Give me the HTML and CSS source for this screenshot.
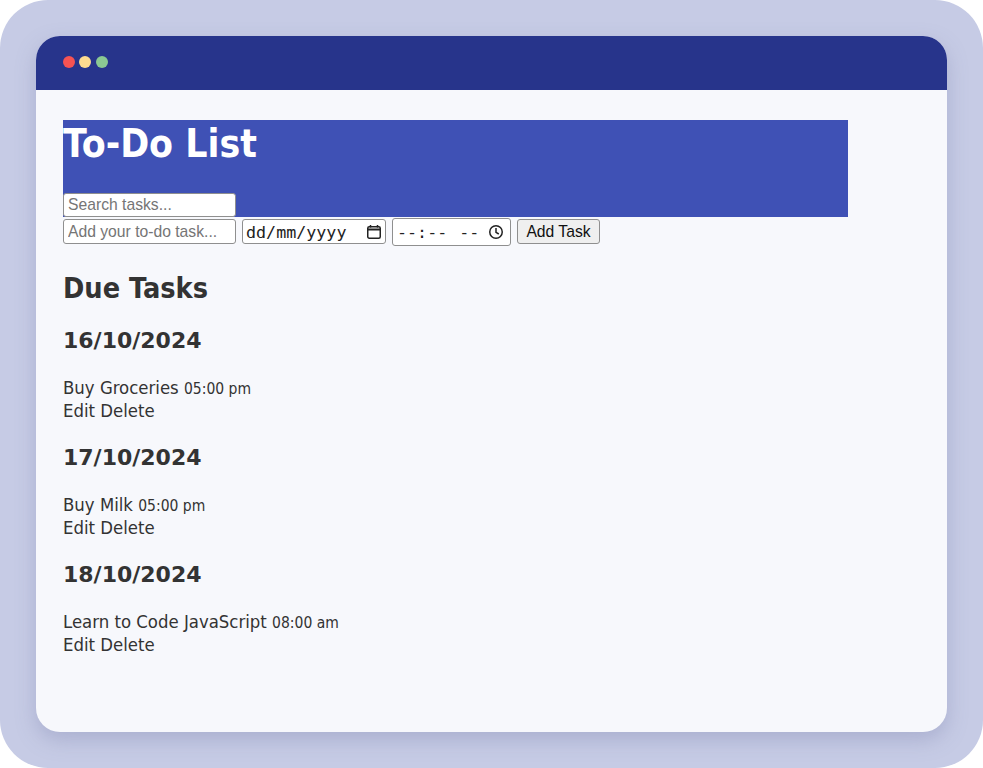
FILE: index.html
```html
<!DOCTYPE html>
<html lang="en-GB">
<head>
  <meta charset="UTF-8">
  <meta name="viewport" content="width=device-width, initial-scale=1.0">
  <title>To-Do List</title>
  <link rel="stylesheet" href="styles.css">
</head>
<body>
  <div class="frame">
    <div class="window">
      <div class="titlebar">
        <span class="dot dot-red"></span>
        <span class="dot dot-yellow"></span>
        <span class="dot dot-green"></span>
      </div>
      <div class="content">
        <header class="banner">
          <h1>To-Do List</h1>
          <input class="search" type="text" placeholder="Search tasks...">
        </header>
        <form class="add-form">
          <input class="task-input" type="text" placeholder="Add your to-do task...">
          <div class="field date-field">
            <span>dd/mm/yyyy</span>
            <svg width="16" height="16" viewBox="0 0 16 16" fill="none" stroke="#222">
              <rect x="1.75" y="2.75" width="12.5" height="11.5" rx="1.5" stroke-width="1.5"/>
              <path d="M1.5 5.5h13" stroke-width="2"/>
              <path d="M4.5 1v2.5M11.5 1v2.5" stroke-width="1.5"/>
            </svg>
          </div>
          <div class="field time-field">
            <span>--:-- --</span>
            <svg width="16" height="16" viewBox="0 0 16 16" fill="none" stroke="#222" stroke-width="1.5">
              <circle cx="8" cy="8" r="6.25"/>
              <path d="M8 4v4.3l2.8 1.7"/>
            </svg>
          </div>
          <button class="add-btn" type="button">Add Task</button>
        </form>

        <h2>Due Tasks</h2>

        <h3>16/10/2024</h3>
        <div class="task">
          <div>Buy Groceries <small>05:00 pm</small></div>
          <div>Edit Delete</div>
        </div>

        <h3>17/10/2024</h3>
        <div class="task">
          <div>Buy Milk <small>05:00 pm</small></div>
          <div>Edit Delete</div>
        </div>

        <h3>18/10/2024</h3>
        <div class="task">
          <div>Learn to Code JavaScript <small>08:00 am</small></div>
          <div>Edit Delete</div>
        </div>
      </div>
    </div>
  </div>
</body>
</html>
```

FILE: styles.css
```css
body {
  margin: 0;
  background: white;
  font-family: "DejaVu Sans Condensed", "DejaVu Sans", sans-serif;
  color: #333;
}

.frame {
  width: 983px;
  height: 768px;
  box-sizing: border-box;
  padding: 36px;
  background: #c6cbe5;
  border-radius: 48px;
}

.window {
  height: 696px;
  background: #f7f8fc;
  border-radius: 24px;
  overflow: hidden;
  box-shadow: 0 8px 20px rgba(120, 125, 170, 0.35);
}

.titlebar {
  height: 54px;
  box-sizing: border-box;
  padding: 0 0 2px 27px;
  background: #27348b;
  display: flex;
  align-items: center;
  gap: 4.3px;
}

.dot {
  width: 12px;
  height: 12px;
  border-radius: 50%;
}

.dot-red { background: #f65353; }
.dot-yellow { background: #fddb90; }
.dot-green { background: #8bc993; }

.content {
  padding: 30px 27px;
}

.banner {
  width: 785px;
  height: 97px;
  background: #3f51b5;
}

h1 {
  margin: 0;
  padding-top: 3px;
  height: 73px;
  box-sizing: border-box;
  font-size: 38.8px;
  line-height: 42px;
  color: white;
}

.add-form {
  display: flex;
  align-items: flex-start;
  gap: 6px;
  margin-top: 2px;
}

input, button {
  font-family: "Liberation Sans", Arial, sans-serif;
  box-sizing: border-box;
}

.search, .task-input {
  display: block;
  width: 173px;
  height: 24px;
  font-size: 15.7px;
  padding: 1px 4px;
  border: 1px solid #8f8f8f;
  border-radius: 3px;
  background: white;
}

.task-input {
  height: 25px;
}

.field {
  display: flex;
  align-items: center;
  justify-content: space-between;
  box-sizing: border-box;
  border: 1px solid #8f8f8f;
  border-radius: 3px;
  background: white;
  font-family: "DejaVu Sans Mono", monospace;
  font-size: 16.7px;
  color: #222;
  white-space: pre;
}

.date-field {
  width: 144px;
  height: 25px;
  padding: 0 3px;
}

.time-field {
  width: 119px;
  height: 28px;
  margin-top: -1px;
  padding: 0 6px 0 4px;
  word-spacing: 2px;
}

.add-btn {
  height: 25px;
  width: 83px;
  font-size: 15.7px;
  padding: 0;
  color: #111;
  background: #efefef;
  border: 1px solid #8f8f8f;
  border-radius: 3px;
}

h2 {
  margin: 25px 0 0;
  font-size: 28.6px;
  line-height: 35px;
}

h3 {
  margin: 21px 0 0;
  font-family: "DejaVu Sans", sans-serif;
  font-size: 22px;
  line-height: 30px;
}

h2 + h3 {
  margin-top: 20px;
}

.task {
  margin-top: 20px;
  font-size: 18.4px;
  line-height: 23px;
}

.task small {
  font-size: 15.5px;
  line-height: 1;
}
```
